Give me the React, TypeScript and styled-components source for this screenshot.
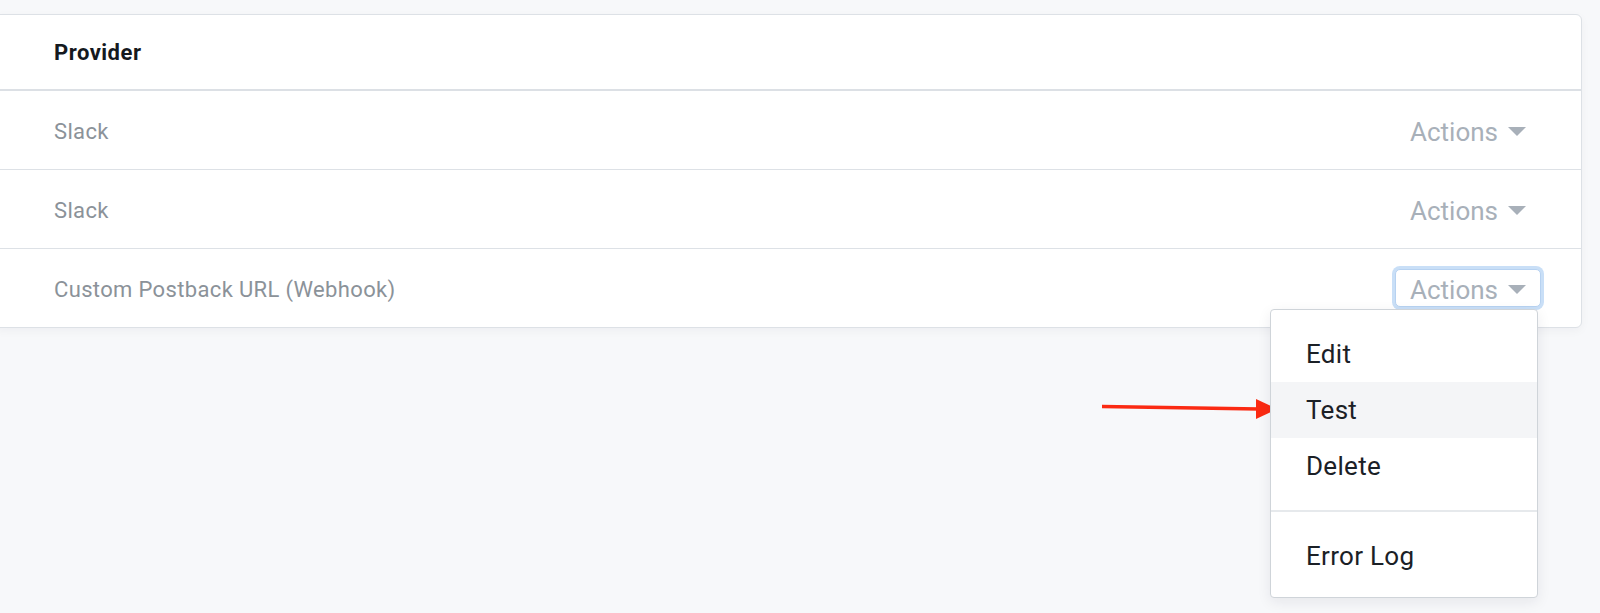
import styled, { createGlobalStyle } from "styled-components";

const GlobalStyle = createGlobalStyle`
  body {
    margin: 0;
    background: #f7f8fa;
    font-family: Roboto, "Liberation Sans", Arial, sans-serif;
    overflow: hidden;
  }
`;

const Page = styled.div`
  position: relative;
  height: 613px;
  padding: 14px 18px 0 0;
  box-sizing: border-box;
`;

const Card = styled.div`
  margin-left: -6px;
  background: #ffffff;
  border: 1px solid #dde1e6;
  border-radius: 6px;
  box-shadow: 0 3px 10px rgba(20, 30, 45, 0.04);
`;

const HeaderRow = styled.div`
  height: 74px;
  display: flex;
  align-items: center;
  padding-left: 59px;
  border-bottom: 2px solid #dce0e5;
  font-size: 22px;
  font-weight: 700;
  letter-spacing: 0.5px;
  color: #15191e;
`;

const Row = styled.div<{ $last?: boolean }>`
  height: 78px;
  display: flex;
  align-items: center;
  justify-content: space-between;
  padding: 0 40px 0 59px;
  border-bottom: ${(p) => (p.$last ? "none" : "1px solid #dde1e6")};
`;

const ProviderName = styled.span`
  font-size: 22px;
  letter-spacing: 0.35px;
  color: #8b9299;
  padding-top: 2px;
`;

const ActionsWrap = styled.div`
  position: relative;
`;

const ActionsButton = styled.button<{ $focused?: boolean }>`
  height: 38px;
  display: flex;
  align-items: center;
  gap: 10px;
  padding: 4px 14px 0 14px;
  background: #ffffff;
  border: 1px solid ${(p) => (p.$focused ? "#b7d2f1" : "transparent")};
  border-radius: 5px;
  box-shadow: ${(p) => (p.$focused ? "0 0 0 3px #c9dff7" : "none")};
  font-family: inherit;
  font-size: 26px;
  color: #a8b0b9;
  cursor: pointer;
`;

const Caret = styled.span`
  width: 0;
  height: 0;
  border-left: 9px solid transparent;
  border-right: 9px solid transparent;
  border-top: 9px solid #a8b0b9;
  margin-top: -2px;
`;

const Menu = styled.div`
  position: absolute;
  top: calc(100% + 2px);
  right: 3px;
  width: 268px;
  box-sizing: border-box;
  padding: 16px 0 13px;
  background: #ffffff;
  border: 1px solid #cfd4d9;
  border-radius: 4px;
  box-shadow: 0 4px 14px rgba(20, 30, 45, 0.08);
  z-index: 2;
`;

const MenuItem = styled.div<{ $active?: boolean }>`
  height: 56px;
  display: flex;
  align-items: center;
  padding-left: 35px;
  font-size: 26px;
  letter-spacing: 0.3px;
  color: #1b2026;
  background: ${(p) => (p.$active ? "#f4f5f7" : "transparent")};
`;

const MenuDivider = styled.div`
  height: 2px;
  margin: 16px 0 16px;
  background: #e6e9ec;
`;

const Arrow = styled.svg`
  position: absolute;
  left: 1095px;
  top: 395px;
  overflow: visible;
`;

const rows = ["Slack", "Slack", "Custom Postback URL (Webhook)"];

export default function App() {
  return (
    <Page>
      <GlobalStyle />
      <Card>
        <HeaderRow>Provider</HeaderRow>
        {rows.map((name, i) => {
          const open = i === rows.length - 1;
          return (
            <Row key={i} $last={open}>
              <ProviderName>{name}</ProviderName>
              <ActionsWrap>
                <ActionsButton $focused={open}>
                  Actions
                  <Caret />
                </ActionsButton>
                {open && (
                  <Menu>
                    <MenuItem>Edit</MenuItem>
                    <MenuItem $active>Test</MenuItem>
                    <MenuItem>Delete</MenuItem>
                    <MenuDivider />
                    <MenuItem>Error Log</MenuItem>
                  </Menu>
                )}
              </ActionsWrap>
            </Row>
          );
        })}
      </Card>
      <Arrow width="190" height="30" viewBox="0 0 190 30">
        <line x1="7" y1="11.5" x2="164" y2="14" stroke="#fb2a12" strokeWidth="3.5" />
        <polygon points="161,4 182,14 161,24" fill="#fb2a12" />
      </Arrow>
    </Page>
  );
}
